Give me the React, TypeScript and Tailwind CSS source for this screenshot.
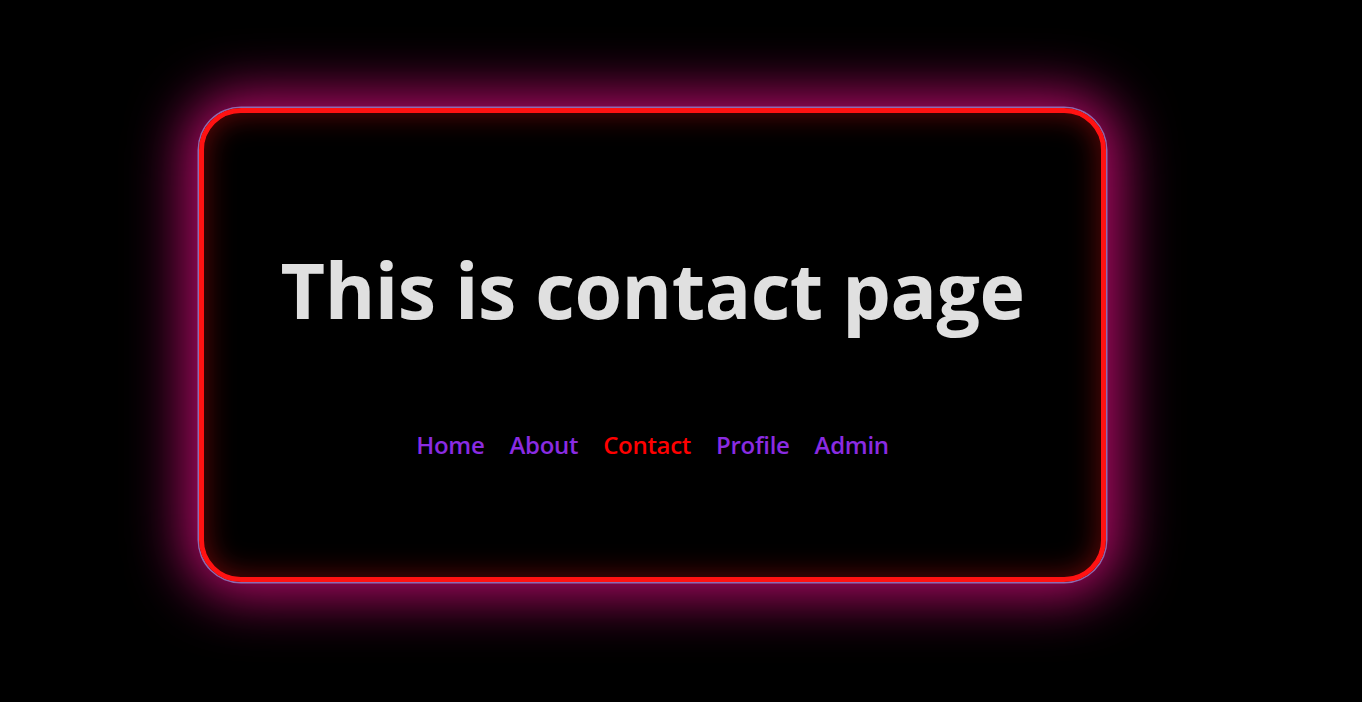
const links = [
  { label: 'Home', active: false },
  { label: 'About', active: false },
  { label: 'Contact', active: true },
  { label: 'Profile', active: false },
  { label: 'Admin', active: false },
]

export default function App() {
  return (
    <div className="min-h-[702px] bg-black pt-[108px] pl-[199px] font-['Open_Sans',sans-serif]">
      <div className="flex h-[474px] w-[907px] flex-col items-center rounded-[42px] border-[5px] border-[#ff1212] shadow-[0_0_0_1.5px_rgba(150,140,215,0.75),0_0_55px_14px_rgba(215,12,125,0.85),inset_0_0_30px_rgba(255,20,20,0.4)]">
        <h1 className="mt-[138px] text-[77px] font-bold leading-none tracking-[-0.5px] text-[#e0e0e0]">
          This is contact page
        </h1>
        <nav className="mt-[99px] flex gap-[25px] text-[24px] font-semibold tracking-[-0.3px]">
          {links.map(l => (
            <a
              key={l.label}
              href="#"
              className={l.active ? 'text-[#ff0000]' : 'text-[#8a2be2]'}
            >
              {l.label}
            </a>
          ))}
        </nav>
      </div>
    </div>
  )
}
